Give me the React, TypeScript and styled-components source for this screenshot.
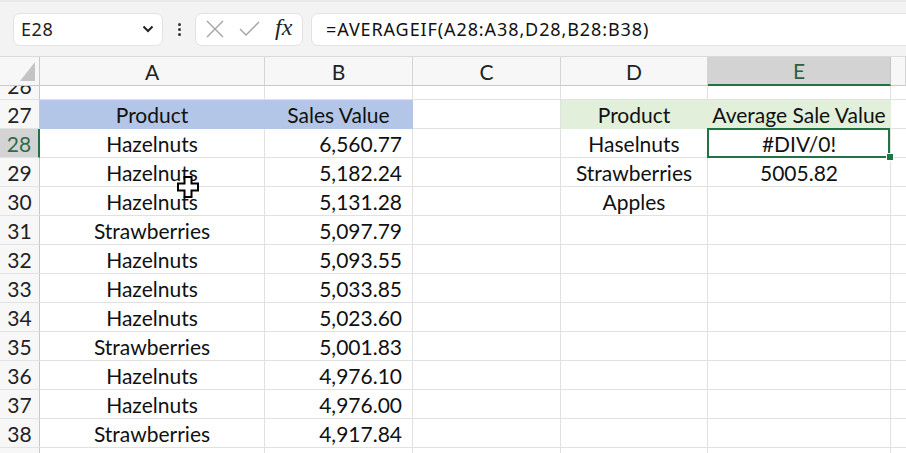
import React from 'react';
import styled, { createGlobalStyle, css } from 'styled-components';

const GREEN = '#217346';
const GRID = '#e1e1e1';
const COLS = '40px 225px 148px 148px 147px 183px 1fr';

const GlobalStyle = createGlobalStyle`
  html, body {
    margin: 0;
    padding: 0;
    background: #ffffff;
  }
  body {
    width: 906px;
    height: 453px;
    overflow: hidden;
    font-family: Lato, "Liberation Sans", sans-serif;
  }
`;

type Align = 'left' | 'center' | 'right';

type CellData = {
  readonly text?: string;
  readonly align?: Align;
  readonly fill?: string;
};

const BLUE = '#b4c6e7';
const MINT = '#e2efda';

const products: ReadonlyArray<[string, string]> = [
  ['Hazelnuts', '6,560.77'],
  ['Hazelnuts', '5,182.24'],
  ['Hazelnuts', '5,131.28'],
  ['Strawberries', '5,097.79'],
  ['Hazelnuts', '5,093.55'],
  ['Hazelnuts', '5,033.85'],
  ['Hazelnuts', '5,023.60'],
  ['Strawberries', '5,001.83'],
  ['Hazelnuts', '4,976.10'],
  ['Hazelnuts', '4,976.00'],
  ['Strawberries', '4,917.84'],
];

const lookup: Record<number, [string, string]> = {
  28: ['Haselnuts', '#DIV/0!'],
  29: ['Strawberries', '5005.82'],
  30: ['Apples', ''],
};

const buildRow = (n: number): CellData[] => {
  if (n === 27) {
    return [
      { text: 'Product', align: 'center', fill: BLUE },
      { text: 'Sales Value', align: 'center', fill: BLUE },
      {},
      { text: 'Product', align: 'center', fill: MINT },
      { text: 'Average Sale Value', align: 'center', fill: MINT },
      {},
    ];
  }
  const item = products[n - 28];
  const side = lookup[n];
  return [
    { text: item?.[0], align: 'center' },
    { text: item?.[1], align: 'right' },
    {},
    { text: side?.[0], align: 'center' },
    { text: side?.[1], align: 'center' },
    {},
  ];
};

const rows = Array.from({ length: 14 }, (_, i) => 26 + i);

export default function App() {
  return (
    <Page>
      <GlobalStyle />
      <Toolbar>
        <NameBox>
          <span>E28</span>
          <svg width="12" height="8" viewBox="0 0 12 8">
            <path d="M1.5 1.5 L6 6 L10.5 1.5" fill="none" stroke="#222" strokeWidth="2" />
          </svg>
        </NameBox>
        <Dots>
          <i />
          <i />
          <i />
        </Dots>
        <FxBox>
          <svg width="18" height="18" viewBox="0 0 18 18">
            <path d="M1 1 L17 17 M17 1 L1 17" stroke="#a3a3a3" strokeWidth="1.4" fill="none" />
          </svg>
          <svg width="21" height="16" viewBox="0 0 21 16">
            <path d="M1 8 L7 14 L20 1" stroke="#a3a3a3" strokeWidth="1.4" fill="none" />
          </svg>
          <Fx>fx</Fx>
        </FxBox>
        <FormulaBox>=AVERAGEIF(A28:A38,D28,B28:B38)</FormulaBox>
      </Toolbar>

      <Sheet>
        <HeaderRow>
          <Corner>
            <svg width="16" height="19" viewBox="0 0 16 19">
              <path d="M15 0 L15 19 L0 19 Z" fill="#c4c4c4" />
            </svg>
          </Corner>
          {['A', 'B', 'C', 'D', 'E', 'F'].map((c) => (
            <ColHead key={c} $active={c === 'E'}>
              {c === 'F' ? '' : c}
            </ColHead>
          ))}
        </HeaderRow>
        <Body>
          {rows.map((n) => (
            <Row key={n} $first={n === 26}>
              <RowHead $active={n === 28}>{n < 39 ? n : ''}</RowHead>
              {buildRow(n).map((cell, i) => (
                <Cell
                  key={i}
                  $align={cell.align ?? 'left'}
                  $fill={cell.fill}
                  $selected={n === 28 && i === 4}
                >
                  {cell.text}
                </Cell>
              ))}
            </Row>
          ))}
        </Body>
      </Sheet>

      <Cursor width="22" height="22" viewBox="0 0 22 22">
        <path
          d="M7.5 1 H14.5 V7.5 H21 V14.5 H14.5 V21 H7.5 V14.5 H1 V7.5 H7.5 Z"
          fill="#ffffff"
          stroke="#000000"
          strokeWidth="2"
        />
      </Cursor>
    </Page>
  );
}

const Page = styled.div`
  position: relative;
  width: 906px;
  height: 453px;
  overflow: hidden;
`;

const Toolbar = styled.div`
  display: flex;
  align-items: center;
  box-sizing: border-box;
  height: 57px;
  padding-left: 13px;
  background: #f3f3f3;
  border-top: 2px solid #e9e9e9;
  border-bottom: 1px solid #dadada;
  font-family: "Noto Sans", "Open Sans", sans-serif;
`;

const boxBase = css`
  box-sizing: border-box;
  height: 33px;
  background: #ffffff;
  border: 1px solid #e2e2e2;
  border-radius: 7px;
  display: flex;
  align-items: center;
`;

const NameBox = styled.div`
  ${boxBase};
  width: 150px;
  justify-content: space-between;
  padding: 0 8px 0 7px;
  font-size: 18px;
  letter-spacing: 0.6px;
  color: #222;
`;

const Dots = styled.div`
  width: 32px;
  display: flex;
  flex-direction: column;
  align-items: center;
  gap: 2px;

  i {
    width: 3px;
    height: 3px;
    border-radius: 50%;
    background: #333;
  }
`;

const FxBox = styled.div`
  ${boxBase};
  width: 108px;
  padding-left: 10px;
  gap: 15px;
`;

const Fx = styled.span`
  font-family: "Liberation Serif", "DejaVu Serif", serif;
  font-style: italic;
  font-size: 24px;
  color: #222;
  margin-top: -3px;
`;

const FormulaBox = styled.div`
  ${boxBase};
  flex: 1;
  margin-left: 8px;
  margin-right: -20px;
  padding-left: 14px;
  font-size: 18px;
  letter-spacing: 0.9px;
  color: #111;
  white-space: nowrap;
`;

const Sheet = styled.div`
  display: flex;
  flex-direction: column;
`;

const gridRow = css`
  display: grid;
  grid-template-columns: ${COLS};
  height: 29px;
`;

const HeaderRow = styled.div`
  ${gridRow};
  position: relative;
  z-index: 1;
  background: #f7f7f7;
`;

const Corner = styled.div`
  display: flex;
  align-items: flex-end;
  justify-content: flex-end;
  padding: 0 3px 4px 0;
  border-right: 1px solid #c9c9c9;
  border-bottom: 1px solid #c9c9c9;
  box-sizing: border-box;
`;

const ColHead = styled.div<{ readonly $active?: boolean }>`
  display: flex;
  align-items: center;
  justify-content: center;
  box-sizing: border-box;
  font-size: 21px;
  color: #222;
  border-right: 1px solid #d4d4d4;
  border-bottom: 1px solid #c9c9c9;

  ${({ $active }) =>
    $active &&
    css`
      background: #d3d3d3;
      color: #2f5f42;
      border-bottom: 2px solid ${GREEN};
      border-right-color: #c4c4c4;
    `}
`;

const Body = styled.div`
  height: 367px;
  overflow: hidden;
`;

const Row = styled.div<{ readonly $first?: boolean }>`
  ${gridRow};
  margin-top: ${({ $first }) => ($first ? '-15px' : '0')};
`;

const RowHead = styled.div<{ readonly $active?: boolean }>`
  display: flex;
  align-items: center;
  justify-content: center;
  box-sizing: border-box;
  font-size: 21px;
  color: #222;
  background: #f7f7f7;
  border-right: 1px solid #c9c9c9;
  border-bottom: 1px solid #e3e3e3;

  ${({ $active }) =>
    $active &&
    css`
      background: #d3d3d3;
      color: #2f6b48;
      border-right: 2px solid ${GREEN};
    `}
`;

const Cell = styled.div<{
  readonly $align: Align;
  readonly $fill?: string;
  readonly $selected?: boolean;
}>`
  position: relative;
  display: flex;
  align-items: center;
  box-sizing: border-box;
  padding: 0 10px;
  font-size: 21px;
  color: #111;
  white-space: nowrap;
  background: ${({ $fill }) => $fill ?? '#ffffff'};
  border-right: 1px solid ${({ $fill }) => $fill ?? GRID};
  border-bottom: 1px solid ${({ $fill }) => $fill ?? GRID};
  justify-content: ${({ $align }) =>
    $align === 'center' ? 'center' : $align === 'right' ? 'flex-end' : 'flex-start'};

  ${({ $selected }) =>
    $selected &&
    css`
      &::after {
        content: '';
        position: absolute;
        inset: -1px 0 -1px -1px;
        border: 2px solid ${GREEN};
      }
      &::before {
        content: '';
        position: absolute;
        right: -4px;
        bottom: -4px;
        width: 6px;
        height: 6px;
        background: ${GREEN};
        border: 1px solid #ffffff;
        z-index: 2;
      }
    `}
`;

const Cursor = styled.svg`
  position: absolute;
  left: 177px;
  top: 176px;
`;
